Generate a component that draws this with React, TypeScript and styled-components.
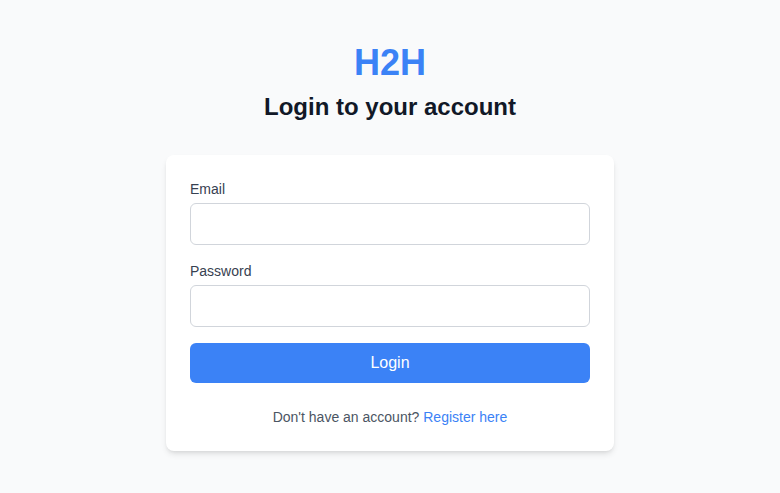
import React from 'react'
import styled, { createGlobalStyle } from 'styled-components'

const GlobalStyle = createGlobalStyle`
  * {
    box-sizing: border-box;
  }
  html,
  body {
    margin: 0;
    padding: 0;
    background: #f9fafb;
    font-family: 'Liberation Sans', Arial, sans-serif;
  }
`

const Page = styled.div`
  min-height: 100vh;
  display: flex;
  flex-direction: column;
  align-items: center;
  justify-content: center;
  padding: 0 16px;
`

const Brand = styled.h1`
  margin: 0 0 8px;
  font-size: 36px;
  line-height: 40px;
  font-weight: 700;
  color: #3b82f6;
`

const Title = styled.h2`
  margin: 0 0 32px;
  font-size: 24px;
  line-height: 32px;
  font-weight: 700;
  color: #111827;
`

const Card = styled.form`
  width: 448px;
  background: #ffffff;
  border-radius: 8px;
  padding: 24px;
  box-shadow: 0 4px 6px -1px rgba(0, 0, 0, 0.1), 0 2px 4px -2px rgba(0, 0, 0, 0.1);
`

const Field = styled.div`
  display: flex;
  flex-direction: column;
  margin-bottom: 16px;
`

const Label = styled.label`
  font-size: 14px;
  line-height: 20px;
  color: #374151;
  margin-bottom: 4px;
`

const Input = styled.input`
  width: 100%;
  height: 42px;
  padding: 8px 12px;
  font-size: 16px;
  line-height: 24px;
  font-family: inherit;
  border: 1px solid #d1d5db;
  border-radius: 6px;
  outline: none;
  background: #ffffff;
`

const Button = styled.button`
  width: 100%;
  height: 40px;
  border: none;
  border-radius: 6px;
  background: #3b82f6;
  color: #ffffff;
  font-size: 16px;
  line-height: 24px;
  font-family: inherit;
  cursor: pointer;
`

const Footer = styled.p`
  margin: 24px 0 0;
  text-align: center;
  font-size: 14px;
  line-height: 20px;
  color: #4b5563;
`

const Link = styled.a`
  color: #3b82f6;
  text-decoration: none;
`

export default function App() {
  return (
    <>
      <GlobalStyle />
      <Page>
        <Brand>H2H</Brand>
        <Title>Login to your account</Title>
        <Card onSubmit={(e) => e.preventDefault()}>
          <Field>
            <Label htmlFor="email">Email</Label>
            <Input id="email" type="email" />
          </Field>
          <Field>
            <Label htmlFor="password">Password</Label>
            <Input id="password" type="password" />
          </Field>
          <Button type="submit">Login</Button>
          <Footer>
            Don't have an account? <Link href="#">Register here</Link>
          </Footer>
        </Card>
      </Page>
    </>
  )
}
